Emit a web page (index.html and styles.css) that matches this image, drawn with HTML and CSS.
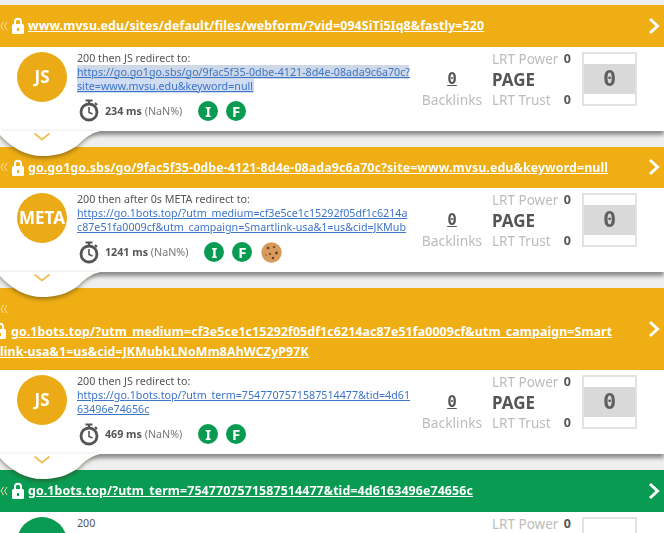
FILE: index.html
```html
<!DOCTYPE html>
<html lang="en">
<head>
<meta charset="utf-8">
<title>Redirect chain</title>
<link rel="stylesheet" href="styles.css">
</head>
<body>
<svg class="defs" width="0" height="0" aria-hidden="true">
  <symbol id="back" viewBox="0 0 8 12"><path d="M3.500 2 1 6l2.500 4M7 2 4.500 6 7 10" fill="none" stroke="currentColor" stroke-width="1"/></symbol>
  <symbol id="lock" viewBox="0 0 12 17"><path d="M3 8V4.700a3 3 0 0 1 6 0V8" fill="none" stroke="#fff" stroke-width="2"/><path fill-rule="evenodd" d="M1.500 7h9A1.500 1.500 0 0 1 12 8.500v7a1.500 1.500 0 0 1-1.500 1.500h-9A1.500 1.500 0 0 1 0 15.500v-7A1.500 1.500 0 0 1 1.500 7ZM5 11v3h2v-3Z" fill="#fff"/></symbol>
  <symbol id="next" viewBox="0 0 12 18"><path d="m2 2 7.500 7L2 16" fill="none" stroke="#fff" stroke-width="3"/></symbol>
  <symbol id="watch" viewBox="0 0 20 23"><circle cx="10" cy="13" r="8" fill="none" stroke="#555" stroke-width="2.800"/><path d="M6.500 1.500h7M10 1.500v3M16 4l2 2" stroke="#555" stroke-width="2.200" fill="none"/><path d="M10 8v5.500l3.500 1.500" stroke="#555" stroke-width="1.600" fill="none"/></symbol>
  <symbol id="cookie" viewBox="0 0 21 21"><circle cx="10.500" cy="10.500" r="10.200" fill="#d99a5e"/><circle cx="7" cy="6" r="1.300" fill="#6a4026"/><circle cx="13" cy="5" r="1.100" fill="#6a4026"/><circle cx="15.500" cy="11" r="1.400" fill="#6a4026"/><circle cx="9" cy="12" r="1.100" fill="#6a4026"/><circle cx="12" cy="16" r="1.200" fill="#6a4026"/><circle cx="5" cy="13" r=".8" fill="#8a5a36"/></symbol>
  <symbol id="bump" viewBox="0 0 120 40"><path d="M-10 -2H112C94 0 88 4 79 13 67 23 54 25 42 25 26 25 12 17 0 4L-10 -2Z" fill="#fff"/></symbol>
</svg>

<section class="hop">
  <header class="bar">
    <svg class="back"><use href="#back"/></svg><svg class="lock"><use href="#lock"/></svg><a class="bar-url" href="#">www.mvsu.edu/sites/default/files/webform/?vid=094SiTi5Iq8&amp;fastly=520</a>
    <svg class="next"><use href="#next"/></svg>
  </header>
  <div class="card">
    <div class="badge">JS</div>
    <div class="info">
      <p class="status">200 then JS redirect to:</p>
      <a class="target selected" href="#">https://go.go1go.sbs/go/9fac5f35-0dbe-4121-8d4e-08ada9c6a70c?site=www.mvsu.edu&amp;keyword=null</a>
      <div class="timing">
        <svg class="watch"><use href="#watch"/></svg>
        <span class="time"><b>234 ms</b> (NaN%)</span>
        <span class="pill">I</span><span class="pill">F</span>
      </div>
    </div>
    <div class="links"><a class="zero" href="#">0</a><span class="muted">Backlinks</span></div>
    <div class="lrt">
      <div class="lrt-row"><span class="muted">LRT Power</span><b>0</b></div>
      <div class="page">PAGE</div>
      <div class="lrt-row"><span class="muted">LRT Trust</span><b>0</b></div>
    </div>
    <div class="score"><span class="score-mid">0</span></div>
    <svg class="bump"><use href="#bump"/></svg>
    <svg class="more" viewBox="0 0 18 10"><path d="m1.500 1.500 7.500 6 7.500-6" fill="none" stroke="currentColor" stroke-width="1.800"/></svg>
  </div>
</section>

<section class="hop">
  <header class="bar">
    <svg class="back"><use href="#back"/></svg><svg class="lock"><use href="#lock"/></svg><a class="bar-url" href="#">go.go1go.sbs/go/9fac5f35-0dbe-4121-8d4e-08ada9c6a70c?site=www.mvsu.edu&amp;keyword=null</a>
    <svg class="next"><use href="#next"/></svg>
  </header>
  <div class="card">
    <div class="badge">META</div>
    <div class="info">
      <p class="status">200 then after 0s META redirect to:</p>
      <a class="target" href="#">https://go.1bots.top/?utm_medium=cf3e5ce1c15292f05df1c6214ac87e51fa0009cf&amp;utm_campaign=Smartlink-usa&amp;1=us&amp;cid=JKMub</a>
      <div class="timing">
        <svg class="watch"><use href="#watch"/></svg>
        <span class="time"><b>1241 ms</b> (NaN%)</span>
        <span class="pill">I</span><span class="pill">F</span><svg class="cookie"><use href="#cookie"/></svg>
      </div>
    </div>
    <div class="links"><a class="zero" href="#">0</a><span class="muted">Backlinks</span></div>
    <div class="lrt">
      <div class="lrt-row"><span class="muted">LRT Power</span><b>0</b></div>
      <div class="page">PAGE</div>
      <div class="lrt-row"><span class="muted">LRT Trust</span><b>0</b></div>
    </div>
    <div class="score"><span class="score-mid">0</span></div>
    <svg class="bump"><use href="#bump"/></svg>
    <svg class="more" viewBox="0 0 18 10"><path d="m1.500 1.500 7.500 6 7.500-6" fill="none" stroke="currentColor" stroke-width="1.800"/></svg>
  </div>
</section>

<section class="hop">
  <header class="bar bar-tall">
    <svg class="back back-own"><use href="#back"/></svg>
    <div class="bar-lines"><svg class="lock lock-cut"><use href="#lock"/></svg><a class="bar-url" href="#">go.1bots.top/?utm_medium=cf3e5ce1c15292f05df1c6214ac87e51fa0009cf&amp;utm_campaign=Smart<br>link-usa&amp;1=us&amp;cid=JKMubkLNoMm8AhWCZyP97K</a></div>
    <svg class="next"><use href="#next"/></svg>
  </header>
  <div class="card">
    <div class="badge">JS</div>
    <div class="info">
      <p class="status">200 then JS redirect to:</p>
      <a class="target" href="#">https://go.1bots.top/?utm_term=7547707571587514477&amp;tid=4d6163496e74656c</a>
      <div class="timing">
        <svg class="watch"><use href="#watch"/></svg>
        <span class="time"><b>469 ms</b> (NaN%)</span>
        <span class="pill">I</span><span class="pill">F</span>
      </div>
    </div>
    <div class="links"><a class="zero" href="#">0</a><span class="muted">Backlinks</span></div>
    <div class="lrt">
      <div class="lrt-row"><span class="muted">LRT Power</span><b>0</b></div>
      <div class="page">PAGE</div>
      <div class="lrt-row"><span class="muted">LRT Trust</span><b>0</b></div>
    </div>
    <div class="score"><span class="score-mid">0</span></div>
    <svg class="bump"><use href="#bump"/></svg>
    <svg class="more" viewBox="0 0 18 10"><path d="m1.500 1.500 7.500 6 7.500-6" fill="none" stroke="currentColor" stroke-width="1.800"/></svg>
  </div>
</section>

<section class="hop final">
  <header class="bar">
    <svg class="back"><use href="#back"/></svg><svg class="lock"><use href="#lock"/></svg><a class="bar-url" href="#">go.1bots.top/?utm_term=7547707571587514477&amp;tid=4d6163496e74656c</a>
    <svg class="next"><use href="#next"/></svg>
  </header>
  <div class="card">
    <div class="badge"></div>
    <div class="info"><p class="status">200</p></div>
    <div class="links"></div>
    <div class="lrt">
      <div class="lrt-row"><span class="muted">LRT Power</span><b>0</b></div>
    </div>
    <div class="score"></div>
  </div>
</section>
</body>
</html>
```
FILE: styles.css
```css
* { box-sizing: border-box; }
html, body { height: 533px; overflow: hidden; }
body {
  margin: 0;
  padding-top: 5px;
  background: #efefef;
  font-family: "Noto Sans", "Open Sans", sans-serif;
  color: #555;
  width: 664px;
  filter: blur(.3px);
}
p { margin: 0; }
.defs { position: absolute; }

.hop { margin-bottom: 16px; --accent: #efae14; --badge: #eaab17; }
.final { --accent: #0a9b52; --badge: #0a9b52; margin-bottom: 0; }

.bar {
  display: flex;
  align-items: center;
  height: 41.500px;
  background: var(--accent);
  color: #fff;
}
.bar-tall {
  display: block;
  position: relative;
  height: 82px;
  padding-top: 15px;
}
.back { width: 8px; height: 12px; margin-right: 4px; color: #f9dea0; flex: none; }
.back-own { display: block; margin-bottom: 6px; }
.lock { width: 12px; height: 17px; margin-right: 4px; flex: none; }
.lock-cut { margin-left: -6px; vertical-align: -3px; margin-right: 5px; }
.bar-lines { line-height: 19px; white-space: nowrap; }
.bar-url {
  color: #fff;
  font-size: 12.400px;
  font-weight: 700;
  letter-spacing: .1px;
  text-decoration: underline;
  white-space: nowrap;
}
.next { width: 12px; height: 18px; margin-left: auto; margin-right: 4px; flex: none; }
.bar-tall .next { position: absolute; right: 0; top: 32px; margin: 0 4px 0 0; }

.card {
  position: relative;
  z-index: 1;
  display: flex;
  height: 84px;
  padding: 5px 0 0 17px;
  background: #fff;
  box-shadow: 0 4px 4px rgba(0, 0, 0, .42);
}
.final .card { box-shadow: none; }
.badge {
  flex: none;
  width: 50px;
  height: 50px;
  margin-right: 10px;
  border-radius: 50%;
  background: var(--badge);
  color: #fff;
  font-size: 17px;
  font-weight: 700;
  line-height: 50px;
  text-align: center;
}
.info { flex: none; width: 335px; margin-top: -1px; font-size: 10.700px; line-height: 14px; }
.status { color: #555; }
.target {
  display: block;
  color: #3d75c9;
  text-decoration: underline;
  word-break: break-all;
  height: 28px;
}
.target.selected { background: linear-gradient(#cfd8e6, #cfd8e6) 0 0 / 332px 14px no-repeat, linear-gradient(#cfdcf2, #cfdcf2) 0 14px / 177px 14px no-repeat; }
.timing { display: flex; align-items: center; margin-top: 7px; height: 22px; margin-left: 2px; }
.watch { width: 20px; height: 23px; margin-right: 6px; flex: none; }
.time { margin-right: 16px; color: #777; }
.time b { color: #555; }
.pill {
  width: 20px;
  height: 20px;
  margin-right: 8px;
  border-radius: 50%;
  background: #0a9b52;
  color: #fff;
  font-size: 15px;
  font-weight: 700;
  line-height: 20px;
  text-align: center;
}
.cookie { width: 21px; height: 21px; margin-left: 1px; }

.links {
  flex: none;
  width: 60px;
  margin: 18px 0 0 10px;
  display: flex;
  flex-direction: column;
  align-items: center;
}
.zero {
  color: #555;
  font: 700 16px/18px "DejaVu Sans Mono", monospace;
  text-decoration: underline;
  margin-bottom: 2px;
}
.muted { color: #bcbcbc; font-size: 13.800px; line-height: 20px; white-space: nowrap; }
.lrt { flex: none; width: 79px; margin: -3px 0 0 10px; }
.lrt-row { display: flex; justify-content: space-between; line-height: 20px; font-size: 12.500px; }
.lrt-row .muted { font-size: 13.500px; }
.lrt-row b { color: #555; }
.page { color: #555; font-size: 17px; font-weight: 700; line-height: 21px; }
.score {
  flex: none;
  width: 55px;
  height: 54px;
  margin-left: 11px;
  border: 2px solid #e2e2e2;
  display: flex;
  align-items: center;
}
.score-mid {
  flex: 1;
  height: 30px;
  background: #d9d9d9;
  color: #5f5f5f;
  font: 700 22px/30px "DejaVu Sans Mono", monospace;
  text-align: center;
}

.bump {
  position: absolute;
  left: 0;
  top: 84px;
  width: 120px;
  height: 40px;
  overflow: visible;
  filter: drop-shadow(0 2px 2px rgba(60, 50, 20, .5));
}
.more {
  position: absolute;
  left: 33px;
  top: 85px;
  width: 18px;
  height: 10px;
  color: #efc05a;
}
```
